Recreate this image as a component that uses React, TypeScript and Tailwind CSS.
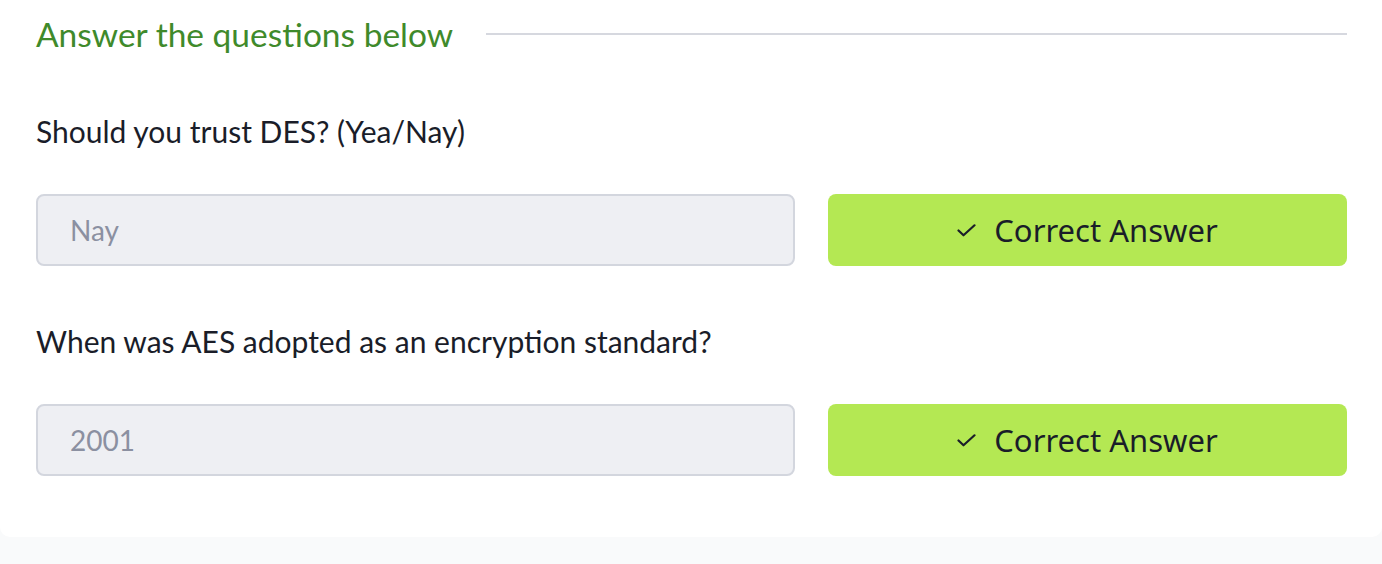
import React from 'react';

type Question = {
	label: string;
	answer: string;
};

const questions: Question[] = [
	{ label: 'Should you trust DES? (Yea/Nay)', answer: 'Nay' },
	{ label: 'When was AES adopted as an encryption standard?', answer: '2001' },
];

const CheckIcon = () => (
	<svg width="19" height="13" viewBox="0 0 19 13" fill="none" className="shrink-0">
		<path d="M1.5 6.5L6.5 11.3L17.5 1.3" stroke="#1a1d29" strokeWidth="2.2" strokeLinecap="round" strokeLinejoin="round" />
	</svg>
);

const QuestionRow: React.FC<{ q: Question }> = ({ q }) => (
	<div className="flex flex-col">
		<div className="text-[30px] leading-[36px] text-[#1a1d29] h-[36px]">{q.label}</div>
		<div className="mt-[45px] flex gap-[33px]">
			<div className="w-[759px] h-[72px] rounded-[8px] border-2 border-[#d3d6de] bg-[#eeeff3] flex items-center pl-[32px] text-[28px] text-[#8b90a1]">
				{q.answer}
			</div>
			<button className="flex-1 h-[72px] rounded-[8px] bg-[#b4e853] flex items-center justify-center gap-[18px] text-[31px] text-[#1a1d29] font-['Noto_Sans',sans-serif]">
				<CheckIcon />
				<span>Correct Answer</span>
			</button>
		</div>
	</div>
);

const App: React.FC = () => {
	return (
		<div className="min-h-[564px] bg-[#f9fafb] font-['Lato','Noto_Sans',sans-serif]">
			<div className="bg-white rounded-b-[10px] pl-[36px] pr-[35px] pt-[14px] pb-[61px]">
				<div className="flex items-center gap-[33px] h-[40px]">
					<div className="text-[33.5px] leading-[40px] text-[#3f8a2b] whitespace-nowrap">Answer the questions below</div>
					<div className="flex-1 h-[2px] bg-[#d6d8df]" />
				</div>
				<div className="mt-[59px] flex flex-col gap-[57px]">
					{questions.map((q) => (
						<QuestionRow key={q.label} q={q} />
					))}
				</div>
			</div>
		</div>
	);
};

export default App;
